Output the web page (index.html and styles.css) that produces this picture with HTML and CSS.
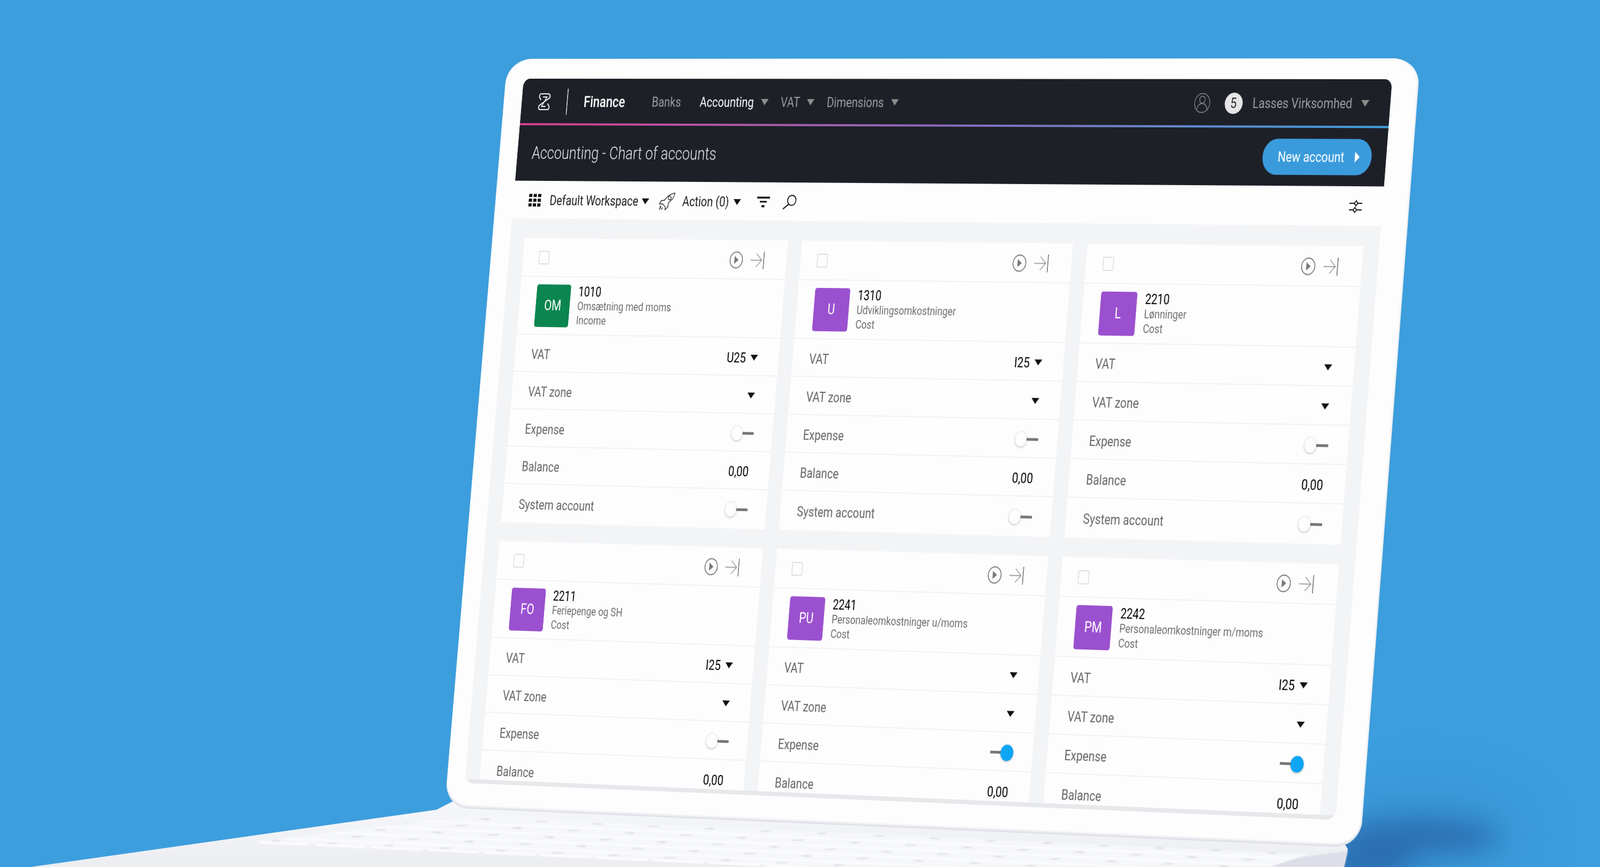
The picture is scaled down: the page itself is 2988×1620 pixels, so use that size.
FILE: index.html
```html
<!DOCTYPE html>
<html lang="en">
<head>
  <meta charset="UTF-8">
  <title>Finance - Chart of accounts</title>
  <link rel="stylesheet" href="styles.css">
</head>
<body>
  <div class="stage">
    <div class="floor-shadow"></div>

    <!-- laptop base -->
    <svg class="deck" viewBox="0 0 2988 1620" width="2988" height="1620">
      <defs>
        <linearGradient id="deckFill" x1="0" y1="1510" x2="0" y2="1620" gradientUnits="userSpaceOnUse">
          <stop offset="0" stop-color="#f5f6f9"/>
          <stop offset="1" stop-color="#ecedf1"/>
        </linearGradient>
        <pattern id="keys" width="105" height="12.5" patternUnits="userSpaceOnUse" patternTransform="matrix(1 0.043 -3.6 1 0 0)">
          <rect width="105" height="12.5" fill="#f6f7fa"/>
          <rect y="10.5" width="105" height="2" fill="#fdfdff"/>
          <rect x="86" y="3" width="18" height="2" fill="#d9dbe2"/>
        </pattern>
        <filter id="soft"><feGaussianBlur stdDeviation="1"/></filter>
      </defs>
      <polygon points="815,1513 860,1490 2500,1560 2517,1586 2510,1620 57,1620" fill="url(#deckFill)"/>
      <polygon points="2517,1590 2510,1620 2290,1620" fill="#dcdfe7" filter="url(#soft)"/>
      <polygon points="880,1524 476,1573 1500,1620 2370,1620 2445,1596" fill="url(#keys)" filter="url(#soft)"/>
      <line x1="484" y1="1574" x2="1500" y2="1620" stroke="#fdfdff" stroke-width="4" stroke-dasharray="95 10" filter="url(#soft)"/>
    </svg>

    <div class="lid">
      <div class="screen">

        <header class="topnav">
          <svg class="logo" viewBox="0 0 30 34" width="30" height="34">
            <path d="M6 2H24c4.5 0 5.5 5 3 8L3.5 24c-3 3-1.5 8 2.5 8H24c4 0 5.500-5 2.500-8l-3-3.500M3.500 10c-3-3-1.500-8 2.500-8M3.500 10l3 3.500" fill="none" stroke="#fff" stroke-width="2.2"/>
            <path d="M11 8h10L9 26h10" fill="none" stroke="#fff" stroke-width="1.8"/>
          </svg>
          <span class="nav-divider"></span>
          <span class="brand">Finance</span>
          <nav class="nav-links">
            <span class="nav-link nav-banks">Banks</span>
            <span class="nav-link is-active">Accounting <i class="caret caret-grey"></i></span>
            <span class="nav-link">VAT <i class="caret caret-grey"></i></span>
            <span class="nav-link">Dimensions <i class="caret caret-grey"></i></span>
          </nav>
          <div class="nav-user">
            <svg class="user-icon" viewBox="0 0 38 38" width="38" height="38">
              <circle cx="19" cy="19" r="17.5" fill="none" stroke="#8a8a8a" stroke-width="1.5"/>
              <circle cx="19" cy="13" r="6.5" fill="none" stroke="#8a8a8a" stroke-width="1.5"/>
              <path d="M7 31c1-7 6-11 12-11s11 4 12 11" fill="none" stroke="#8a8a8a" stroke-width="1.5"/>
            </svg>
            <span class="company-badge">5</span>
            <span class="company-name">Lasses Virksomhed</span>
            <i class="caret caret-grey"></i>
          </div>
        </header>
        <div class="rainbow"></div>

        <div class="titlebar">
          <h1>Accounting - Chart of accounts</h1>
          <button class="new-btn">New account <i class="btn-arrow"></i></button>
        </div>

        <div class="toolbar">
          <svg class="grid-icon" viewBox="0 0 30 24" width="30" height="24">
            <path d="M0 0h8v6H0zM11 0h8v6h-8zM22 0h8v6h-8zM0 9h8v6H0zM11 9h8v6h-8zM22 9h8v6h-8zM0 18h8v6H0zM11 18h8v6h-8zM22 18h8v6h-8z" fill="#111"/>
          </svg>
          <span class="tool-label tool-workspace">Default Workspace</span>
          <i class="caret caret-black"></i>
          <svg class="rocket-icon" viewBox="0 0 40 34" width="40" height="34">
            <path d="M38 1.5C28 3 19 8 14 15L6 16 2 22l8 0 7 6 0 5 6-5 1-8C32 15 37 9 38 1.5z" fill="none" stroke="#222" stroke-width="1.6"/>
            <circle cx="26" cy="11" r="3.5" fill="none" stroke="#222" stroke-width="1.6"/>
            <path d="M3 29l4-4M2 33l5-5M7 33l4-4" stroke="#222" stroke-width="1.6"/>
          </svg>
          <span class="tool-label tool-action">Action (0)</span>
          <i class="caret caret-black"></i>
          <svg class="filter-icon" viewBox="0 0 31 20" width="31" height="20">
            <path d="M0 0h31v3.5H0zM7 8h17v3H7zM12 16h7v4h-7z" fill="#111"/>
          </svg>
          <svg class="search-icon" viewBox="0 0 34 28" width="34" height="28">
            <ellipse cx="22" cy="10.5" rx="10" ry="9.5" fill="none" stroke="#111" stroke-width="2"/>
            <path d="M15 18L2 27" stroke="#111" stroke-width="2.4"/>
          </svg>
          <svg class="sliders-icon" viewBox="0 0 29 24" width="29" height="24">
            <path d="M0 6h29M0 18h29M15 0v3M15 9v3M13 12v3M13 21v3" stroke="#111" stroke-width="1.8"/>
            <circle cx="15" cy="6" r="3.2" fill="#fff" stroke="#111" stroke-width="1.8"/>
            <circle cx="13" cy="18" r="3.2" fill="#fff" stroke="#111" stroke-width="1.8"/>
          </svg>
        </div>

        <main class="board">

          <section class="card">
            <div class="card-top">
              <span class="check"></span>
              <svg class="play-icon" viewBox="0 0 33 33" width="33" height="33"><circle cx="16.5" cy="16.5" r="15" fill="none" stroke="#777" stroke-width="2"/><path d="M12 9l10 7.5L12 24z" fill="#777"/></svg>
              <svg class="open-icon" viewBox="0 0 33 33" width="33" height="33"><path d="M0 16.5h26M14 4l13 12.5L14 29" fill="none" stroke="#888" stroke-width="1.4"/><path d="M32 0v33" stroke="#555" stroke-width="1.6"/></svg>
            </div>
            <div class="card-id">
              <span class="avatar avatar-green">OM</span>
              <div class="id-text">
                <div class="acc-no">1010</div>
                <div class="acc-name">Omsætning med moms</div>
                <div class="acc-type">Income</div>
              </div>
            </div>
            <div class="row"><span class="label">VAT</span><span class="value">U25 <i class="caret caret-black"></i></span></div>
            <div class="row"><span class="label">VAT zone</span><span class="value"><i class="caret caret-black"></i></span></div>
            <div class="row"><span class="label">Expense</span><span class="switch"><i class="knob"></i><i class="track"></i></span></div>
            <div class="row"><span class="label">Balance</span><span class="value">0,00</span></div>
            <div class="row"><span class="label">System account</span><span class="switch"><i class="knob"></i><i class="track"></i></span></div>
          </section>

          <section class="card">
            <div class="card-top">
              <span class="check"></span>
              <svg class="play-icon" viewBox="0 0 33 33" width="33" height="33"><circle cx="16.5" cy="16.5" r="15" fill="none" stroke="#777" stroke-width="2"/><path d="M12 9l10 7.5L12 24z" fill="#777"/></svg>
              <svg class="open-icon" viewBox="0 0 33 33" width="33" height="33"><path d="M0 16.5h26M14 4l13 12.5L14 29" fill="none" stroke="#888" stroke-width="1.4"/><path d="M32 0v33" stroke="#555" stroke-width="1.6"/></svg>
            </div>
            <div class="card-id">
              <span class="avatar">U</span>
              <div class="id-text">
                <div class="acc-no">1310</div>
                <div class="acc-name">Udviklingsomkostninger</div>
                <div class="acc-type">Cost</div>
              </div>
            </div>
            <div class="row"><span class="label">VAT</span><span class="value">I25 <i class="caret caret-black"></i></span></div>
            <div class="row"><span class="label">VAT zone</span><span class="value"><i class="caret caret-black"></i></span></div>
            <div class="row"><span class="label">Expense</span><span class="switch"><i class="knob"></i><i class="track"></i></span></div>
            <div class="row"><span class="label">Balance</span><span class="value">0,00</span></div>
            <div class="row"><span class="label">System account</span><span class="switch"><i class="knob"></i><i class="track"></i></span></div>
          </section>

          <section class="card">
            <div class="card-top">
              <span class="check"></span>
              <svg class="play-icon" viewBox="0 0 33 33" width="33" height="33"><circle cx="16.5" cy="16.5" r="15" fill="none" stroke="#777" stroke-width="2"/><path d="M12 9l10 7.5L12 24z" fill="#777"/></svg>
              <svg class="open-icon" viewBox="0 0 33 33" width="33" height="33"><path d="M0 16.5h26M14 4l13 12.5L14 29" fill="none" stroke="#888" stroke-width="1.4"/><path d="M32 0v33" stroke="#555" stroke-width="1.6"/></svg>
            </div>
            <div class="card-id">
              <span class="avatar">L</span>
              <div class="id-text">
                <div class="acc-no">2210</div>
                <div class="acc-name">Lønninger</div>
                <div class="acc-type">Cost</div>
              </div>
            </div>
            <div class="row"><span class="label">VAT</span><span class="value"><i class="caret caret-black"></i></span></div>
            <div class="row"><span class="label">VAT zone</span><span class="value"><i class="caret caret-black"></i></span></div>
            <div class="row"><span class="label">Expense</span><span class="switch"><i class="knob"></i><i class="track"></i></span></div>
            <div class="row"><span class="label">Balance</span><span class="value">0,00</span></div>
            <div class="row"><span class="label">System account</span><span class="switch"><i class="knob"></i><i class="track"></i></span></div>
          </section>

          <section class="card">
            <div class="card-top">
              <span class="check"></span>
              <svg class="play-icon" viewBox="0 0 33 33" width="33" height="33"><circle cx="16.5" cy="16.5" r="15" fill="none" stroke="#777" stroke-width="2"/><path d="M12 9l10 7.5L12 24z" fill="#777"/></svg>
              <svg class="open-icon" viewBox="0 0 33 33" width="33" height="33"><path d="M0 16.5h26M14 4l13 12.5L14 29" fill="none" stroke="#888" stroke-width="1.4"/><path d="M32 0v33" stroke="#555" stroke-width="1.6"/></svg>
            </div>
            <div class="card-id">
              <span class="avatar">FO</span>
              <div class="id-text">
                <div class="acc-no">2211</div>
                <div class="acc-name">Feriepenge og SH</div>
                <div class="acc-type">Cost</div>
              </div>
            </div>
            <div class="row"><span class="label">VAT</span><span class="value">I25 <i class="caret caret-black"></i></span></div>
            <div class="row"><span class="label">VAT zone</span><span class="value"><i class="caret caret-black"></i></span></div>
            <div class="row"><span class="label">Expense</span><span class="switch"><i class="knob"></i><i class="track"></i></span></div>
            <div class="row"><span class="label">Balance</span><span class="value">0,00</span></div>
          </section>

          <section class="card">
            <div class="card-top">
              <span class="check"></span>
              <svg class="play-icon" viewBox="0 0 33 33" width="33" height="33"><circle cx="16.5" cy="16.5" r="15" fill="none" stroke="#777" stroke-width="2"/><path d="M12 9l10 7.5L12 24z" fill="#777"/></svg>
              <svg class="open-icon" viewBox="0 0 33 33" width="33" height="33"><path d="M0 16.5h26M14 4l13 12.5L14 29" fill="none" stroke="#888" stroke-width="1.4"/><path d="M32 0v33" stroke="#555" stroke-width="1.6"/></svg>
            </div>
            <div class="card-id">
              <span class="avatar">PU</span>
              <div class="id-text">
                <div class="acc-no">2241</div>
                <div class="acc-name">Personaleomkostninger u/moms</div>
                <div class="acc-type">Cost</div>
              </div>
            </div>
            <div class="row"><span class="label">VAT</span><span class="value"><i class="caret caret-black"></i></span></div>
            <div class="row"><span class="label">VAT zone</span><span class="value"><i class="caret caret-black"></i></span></div>
            <div class="row"><span class="label">Expense</span><span class="switch is-on"><i class="knob"></i><i class="track"></i></span></div>
            <div class="row"><span class="label">Balance</span><span class="value">0,00</span></div>
          </section>

          <section class="card">
            <div class="card-top">
              <span class="check"></span>
              <svg class="play-icon" viewBox="0 0 33 33" width="33" height="33"><circle cx="16.5" cy="16.5" r="15" fill="none" stroke="#777" stroke-width="2"/><path d="M12 9l10 7.5L12 24z" fill="#777"/></svg>
              <svg class="open-icon" viewBox="0 0 33 33" width="33" height="33"><path d="M0 16.5h26M14 4l13 12.5L14 29" fill="none" stroke="#888" stroke-width="1.4"/><path d="M32 0v33" stroke="#555" stroke-width="1.6"/></svg>
            </div>
            <div class="card-id">
              <span class="avatar">PM</span>
              <div class="id-text">
                <div class="acc-no">2242</div>
                <div class="acc-name">Personaleomkostninger m/moms</div>
                <div class="acc-type">Cost</div>
              </div>
            </div>
            <div class="row"><span class="label">VAT</span><span class="value">I25 <i class="caret caret-black"></i></span></div>
            <div class="row"><span class="label">VAT zone</span><span class="value"><i class="caret caret-black"></i></span></div>
            <div class="row"><span class="label">Expense</span><span class="switch is-on"><i class="knob"></i><i class="track"></i></span></div>
            <div class="row"><span class="label">Balance</span><span class="value">0,00</span></div>
          </section>

        </main>
      </div>
    </div>
  </div>
</body>
</html>
```

FILE: styles.css
```css
body {
  margin: 0;
  font-family: Roboto, sans-serif;
}
.stage {
  position: relative;
  width: 2988px;
  height: 1620px;
  overflow: hidden;
  background: #3c9edd;
}
.floor-shadow {
  position: absolute;
  left: 2500px;
  top: 1530px;
  width: 300px;
  height: 66px;
  border-radius: 50%;
  background: #2b6fb2;
  filter: blur(24px);
  box-shadow: 0 0 100px 40px rgba(43, 111, 178, 0.3);
}
.floor-shadow::after {
  content: "";
  position: absolute;
  left: -40px;
  top: 50px;
  width: 180px;
  height: 70px;
  border-radius: 50%;
  background: #2b6fb2;
}
.deck {
  position: absolute;
  left: 0;
  top: 0;
}

/* the lid is laid out flat, then warped onto the photo's perspective */
.lid {
  position: absolute;
  left: -45px;
  top: -38px;
  width: 2165px;
  height: 1426px;
  box-sizing: border-box;
  padding: 38px 60px 48px 45px;
  background: #fdfdfe;
  border-radius: 62px 62px 58px 58px / 48px 48px 48px 48px;
  box-shadow: inset 0 -5px 4px -1px #dcdee5, inset -3px 0 3px #eceef2;
  filter: blur(0.5px);
  transform-origin: 45px 38px;
  transform: matrix3d(0.72572, -0.0030243, 0, -0.000023714, -0.085746, 0.97593, 0, -0.0000042124, 0, 0, 1, 0, 978, 147, 0, 1);
}
.screen {
  display: flex;
  flex-direction: column;
  width: 2060px;
  height: 1340px;
  overflow: hidden;
  background: #fdfdfe;
  border-radius: 16px 16px 20px 20px;
}

/* dark header */
.topnav {
  display: flex;
  align-items: center;
  flex: none;
  box-sizing: border-box;
  height: 85px;
  padding: 3px 48px 0 41px;
  background: #1e2028;
  color: #9c9c9c;
  font-size: 26px;
}
.logo {
  flex: none;
}
.nav-divider {
  width: 2px;
  height: 50px;
  margin: 0 40px 0 41px;
  background: #d8d8d8;
}
.brand {
  width: 104px;
  color: #fff;
  font-size: 29px;
  font-weight: 500;
}
.nav-links {
  display: flex;
  align-items: center;
  gap: 30px;
  margin-left: 64px;
}
.nav-link {
  display: flex;
  align-items: center;
  gap: 17px;
}
.nav-banks {
  margin-right: 16px;
}
.is-active {
  color: #fff;
}
.nav-user {
  display: flex;
  align-items: center;
  margin-left: auto;
}
.company-badge {
  display: flex;
  align-items: center;
  justify-content: center;
  width: 41px;
  height: 39px;
  margin: 0 23px 0 33px;
  border-radius: 50%;
  background: #e6e6e6;
  color: #1e2028;
}
.company-name {
  margin-right: 20px;
}
.caret {
  display: inline-block;
  flex: none;
  width: 0;
  height: 0;
  border-left: 9px solid transparent;
  border-right: 9px solid transparent;
}
.caret-grey {
  border-top: 12px solid #8c8c8c;
}
.caret-black {
  border-top: 11px solid #111;
}
.rainbow {
  flex: none;
  height: 4px;
  background: linear-gradient(90deg, #d83f8e 0%, #b45aa6 25%, #8a6bbd 50%, #6a85c9 72%, #3f9fdc 100%);
}
.titlebar {
  display: flex;
  align-items: center;
  justify-content: space-between;
  flex: none;
  height: 106px;
  padding: 0 33px 0 36px;
  background: #1e2028;
}
h1 {
  margin: 0 0 2px;
  color: #e8e8e8;
  font-size: 33.4px;
  font-weight: 300;
}
.new-btn {
  display: flex;
  align-items: center;
  justify-content: center;
  gap: 24px;
  width: 248px;
  height: 66px;
  padding: 0 0 0 8px;
  border: 0;
  border-radius: 33px;
  background: #3a9bdc;
  color: #fff;
  font-family: inherit;
  font-size: 26px;
}
.btn-arrow {
  width: 0;
  height: 0;
  border-top: 10px solid transparent;
  border-bottom: 10px solid transparent;
  border-left: 11px solid #fff;
}

/* toolbar */
.toolbar {
  display: flex;
  align-items: center;
  flex: none;
  box-sizing: border-box;
  height: 72px;
  padding: 2px 46px 0 38px;
  color: #1a1a1a;
  font-size: 26px;
}
.tool-workspace {
  margin: 0 8px 0 22px;
}
.rocket-icon {
  margin: 0 18px 0 24px;
}
.tool-action {
  margin-right: 11px;
}
.filter-icon {
  margin-left: 39px;
}
.search-icon {
  margin-left: 31px;
}
.sliders-icon {
  margin-left: auto;
}

/* cards */
.board {
  flex: 1;
  min-height: 0;
  display: grid;
  grid-template-columns: 645px 642px 633px;
  grid-auto-rows: 541px;
  column-gap: 34px;
  row-gap: 35px;
  padding: 37px 36px 0;
  overflow: hidden;
  background: #f3f4f6;
  border-bottom: 8px solid #e7e8ec;
}
.card {
  background: #fdfdfe;
}
.card-top {
  display: flex;
  align-items: center;
  box-sizing: border-box;
  height: 74px;
  padding: 2px 54px 0 39px;
  border-bottom: 2px solid #f0f1f3;
}
.check {
  width: 22px;
  height: 22px;
  margin-right: auto;
  border: 2px solid #dedfe2;
  border-radius: 3px;
}
.open-icon {
  margin-left: 18px;
}
.card-id {
  display: flex;
  align-items: center;
  box-sizing: border-box;
  height: 110px;
  padding-left: 41px;
  border-bottom: 2px solid #f0f1f3;
}
.avatar {
  display: flex;
  align-items: center;
  justify-content: center;
  flex: none;
  width: 84px;
  height: 81px;
  margin-right: 19px;
  border-radius: 5px;
  background: #9b51cf;
  color: #fff;
  font-size: 27px;
}
.avatar-green {
  background: #0b8650;
}
.id-text {
  padding-top: 1px;
  line-height: 27px;
}
.acc-no {
  color: #000;
  font-size: 25px;
}
.acc-name,
.acc-type {
  color: #6e6e6e;
  font-size: 22px;
}
.row {
  display: flex;
  align-items: center;
  justify-content: space-between;
  box-sizing: border-box;
  height: 71px;
  padding: 4px 50px 0 40px;
  border-bottom: 2px solid #f0f1f3;
  font-size: 26px;
}
.row:last-child {
  border-bottom: 0;
}
.label {
  color: #666;
}
.value {
  display: flex;
  align-items: center;
  gap: 11px;
  color: #000;
}
.switch {
  display: flex;
  align-items: center;
  width: 54px;
  margin-right: -5px;
}
.switch.is-on {
  flex-direction: row-reverse;
}
.knob {
  position: relative;
  flex: none;
  width: 27px;
  height: 27px;
  margin-right: -9px;
  border-radius: 50%;
  background: #fdfdfe;
  box-shadow: 0 1px 4px rgba(0, 0, 0, 0.3);
}
.track {
  flex: 1;
  height: 5px;
  background: #777;
}
.is-on .knob {
  width: 30px;
  height: 30px;
  margin: 0 0 0 -9px;
  background: #0ea5f5;
}
```
